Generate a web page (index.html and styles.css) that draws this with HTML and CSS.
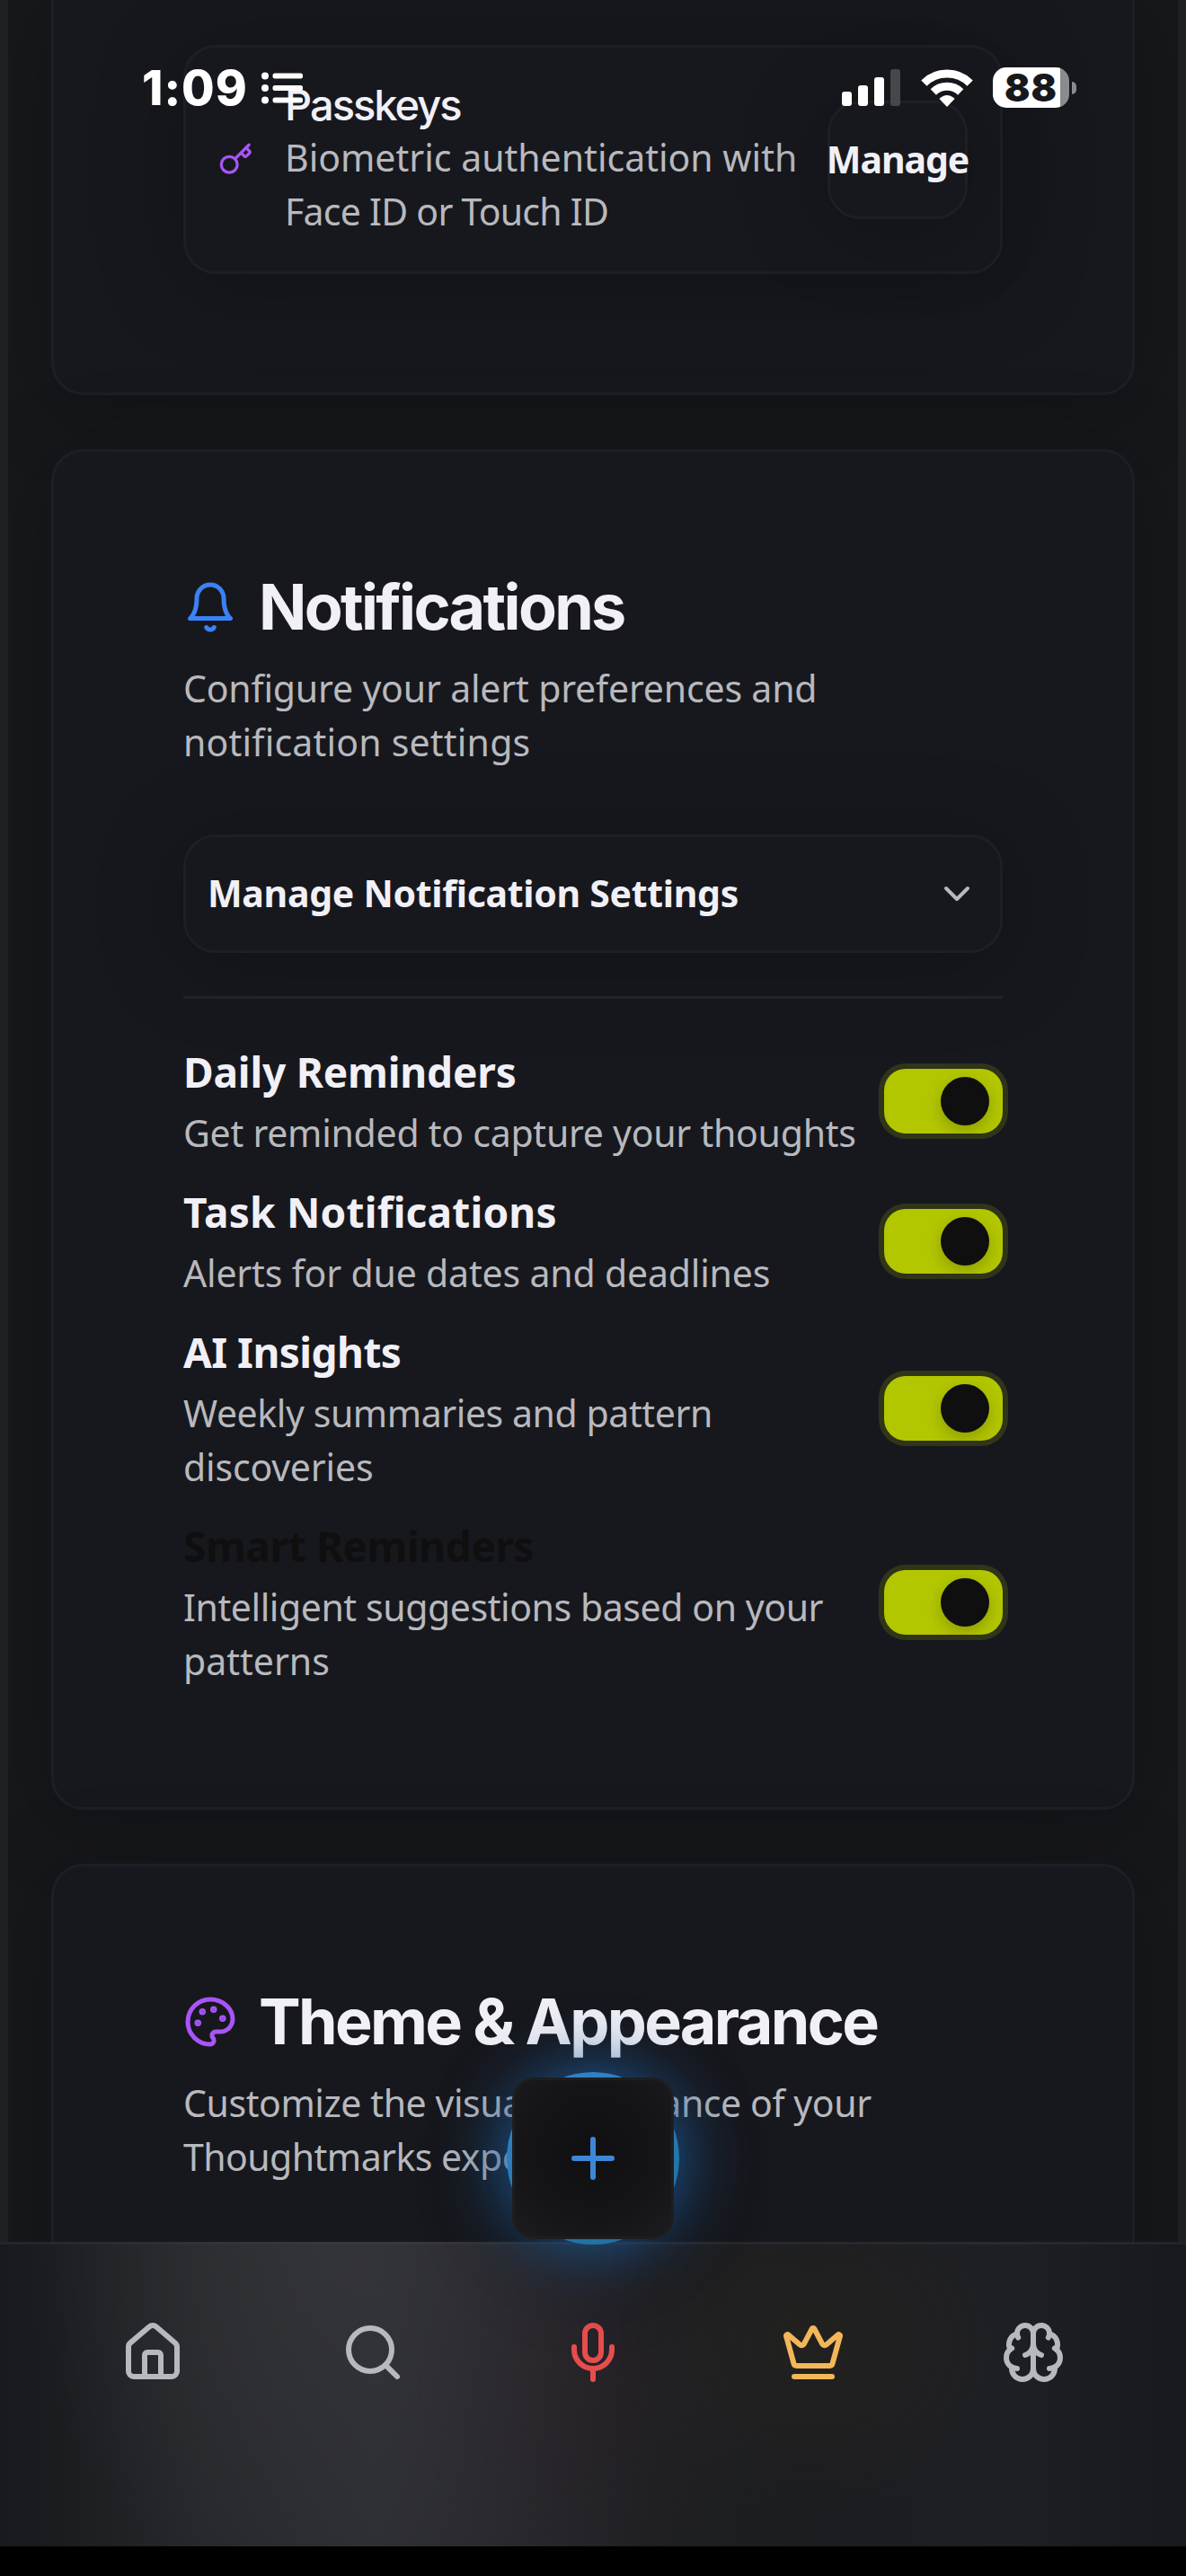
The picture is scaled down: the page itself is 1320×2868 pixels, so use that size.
FILE: index.html
```html
<!DOCTYPE html>
<html lang="en">
<head>
<meta charset="utf-8">
<title>Settings</title>
<link rel="stylesheet" href="styles.css">
</head>
<body>
<div class="screen">
  <main class="page">
    <section class="card card-first">
      <div class="passkey">
        <svg class="key" viewBox="0 0 24 24"><path d="m15.5 7.5 2.3 2.3a1 1 0 0 0 1.4 0l2.1-2.1a1 1 0 0 0 0-1.4L19 4"/><path d="m21 2-9.6 9.6"/><circle cx="7.5" cy="15.5" r="5.5"/></svg>
        <div class="passkey-text">
          <h3 class="passkey-title">Passkeys</h3>
          <p class="desc"><span class="line ls-0">Biometric authentication with</span> <span class="line ls-n7">Face ID or Touch ID</span></p>
        </div>
        <button class="manage">Manage</button>
      </div>
    </section>

    <section class="card">
      <header class="heading">
        <svg class="heading-icon blue" viewBox="0 0 24 24"><path d="M6 8a6 6 0 0 1 12 0c0 7 3 9 3 9H3s3-2 3-9"/><path d="M10.3 21a1.94 1.94 0 0 0 3.4 0"/></svg>
        <h2>Notifications</h2>
      </header>
      <p class="desc intro"><span class="line ls-n2">Configure your alert preferences and</span> <span class="line ls-p2">notification settings</span></p>
      <button class="dropdown">
        <span>Manage Notification Settings</span>
        <svg class="chevron" viewBox="0 0 24 24"><path d="m6 9 6 6 6-6"/></svg>
      </button>
      <div class="rows">
        <div class="row">
          <div class="row-text">
            <h3 class="row-title ls-n2">Daily Reminders</h3>
            <p class="desc"><span class="line ls-n3">Get reminded to capture your thoughts</span></p>
          </div>
          <span class="toggle"><i class="knob"></i></span>
        </div>
        <div class="row">
          <div class="row-text">
            <h3 class="row-title ls-p2">Task Notifications</h3>
            <p class="desc"><span class="line ls-n2">Alerts for due dates and deadlines</span></p>
          </div>
          <span class="toggle"><i class="knob"></i></span>
        </div>
        <div class="row">
          <div class="row-text">
            <h3 class="row-title ls-n5">AI Insights</h3>
            <p class="desc"><span class="line ls-n4">Weekly summaries and pattern</span> <span class="line ls-n2">discoveries</span></p>
          </div>
          <span class="toggle"><i class="knob"></i></span>
        </div>
        <div class="row">
          <div class="row-text">
            <h3 class="row-title row-title-dark ls-n4">Smart Reminders</h3>
            <p class="desc"><span class="line ls-n4">Intelligent suggestions based on your</span> <span class="line ls-0">patterns</span></p>
          </div>
          <span class="toggle"><i class="knob"></i></span>
        </div>
      </div>
    </section>

    <section class="card card-last">
      <header class="heading">
        <svg class="heading-icon purple" viewBox="0 0 24 24"><circle cx="13.5" cy="6.5" r=".5"/><circle cx="17.5" cy="10.5" r=".5"/><circle cx="8.5" cy="7.5" r=".5"/><circle cx="6.5" cy="12.5" r=".5"/><path d="M12 2C6.5 2 2 6.5 2 12s4.5 10 10 10c.926 0 1.648-.746 1.648-1.688 0-.437-.18-.835-.437-1.125-.29-.289-.438-.652-.438-1.125a1.64 1.64 0 0 1 1.668-1.668h1.996c3.051 0 5.555-2.503 5.555-5.554C21.965 6.012 17.461 2 12 2z"/></svg>
        <h2>Theme &amp; Appearance</h2>
      </header>
      <p class="desc intro"><span class="line ls-n4">Customize the visual appearance of your</span> <span class="line ls-n5">Thoughtmarks experience</span></p>
    </section>
  </main>

  <nav class="tabbar">
    <svg class="tab" viewBox="0 0 24 24"><path d="M15 21v-8a1 1 0 0 0-1-1h-4a1 1 0 0 0-1 1v8"/><path d="M3 10a2 2 0 0 1 .709-1.528l7-5.999a2 2 0 0 1 2.582 0l7 5.999A2 2 0 0 1 21 10v9a2 2 0 0 1-2 2H5a2 2 0 0 1-2-2z"/></svg>
    <svg class="tab" viewBox="0 0 24 24"><circle cx="11" cy="11" r="8"/><path d="m21 21-4.3-4.3"/></svg>
    <svg class="tab red" viewBox="0 0 24 24"><path d="M12 19v3"/><path d="M19 10v1a7 7 0 0 1-14 0v-1"/><rect x="9" y="2" width="6" height="13" rx="3"/></svg>
    <svg class="tab gold" viewBox="0 0 24 24"><path d="M11.562 3.266a.5.5 0 0 1 .876 0L15.39 8.87a1 1 0 0 0 1.516.294L21.183 5.5a.5.5 0 0 1 .798.519l-2.834 10.246a1 1 0 0 1-.956.734H5.81a1 1 0 0 1-.957-.734L2.02 6.02a.5.5 0 0 1 .798-.519l4.276 3.664a1 1 0 0 0 1.516-.294z"/><path d="M5 21h14"/></svg>
    <svg class="tab" viewBox="0 0 24 24"><path d="M12 5a3 3 0 1 0-5.997.125 4 4 0 0 0-2.526 5.77 4 4 0 0 0 .556 6.588A4 4 0 1 0 12 18Z"/><path d="M12 5a3 3 0 1 1 5.997.125 4 4 0 0 1 2.526 5.77 4 4 0 0 1-.556 6.588A4 4 0 1 1 12 18Z"/><path d="M15 13a4.5 4.5 0 0 1-3-4 4.5 4.5 0 0 1-3 4"/><path d="M17.599 6.5a3 3 0 0 0 .399-1.375"/><path d="M6.003 5.125A3 3 0 0 0 6.401 6.5"/><path d="M3.477 10.896a4 4 0 0 1 .585-.396"/><path d="M19.938 10.5a4 4 0 0 1 .585.396"/><path d="M6 18a4 4 0 0 1-1.967-.516"/><path d="M19.967 17.484A4 4 0 0 1 18 18"/></svg>
  </nav>
  <div class="home-strip"></div>

  <div class="fab">
    <button class="fab-button"><svg class="plus" viewBox="0 0 24 24"><path d="M5 12h14M12 5v14"/></svg></button>
  </div>

  <div class="status">
    <span class="clock">1:09</span>
    <svg class="list" viewBox="0 0 46 36"><g fill="#fff"><circle cx="4" cy="4.5" r="4"/><circle cx="4" cy="18" r="4"/><circle cx="4" cy="31.5" r="4"/><rect x="12.5" y="1.5" width="33.5" height="6" rx="2.5"/><rect x="12.5" y="15" width="33.5" height="6" rx="2.5"/><rect x="12.5" y="28.5" width="33.5" height="6" rx="2.5"/></g></svg>
    <svg class="signal" viewBox="0 0 65 41"><g fill="#fff"><rect x="0" y="25" width="11" height="16" rx="3"/><rect x="18" y="18" width="11" height="23" rx="3"/><rect x="36" y="9" width="11" height="32" rx="3"/></g><rect x="54" y="0" width="11" height="41" rx="3" fill="#46474b"/></svg>
    <svg class="wifi" viewBox="0 0 58 42"><g fill="none" stroke="#fff" stroke-width="9"><path d="M3.4 15.6A36.5 36.5 0 0 1 54.6 15.6"/><path d="M13.8 25.4A22 22 0 0 1 44.2 25.4"/></g><path d="M29 42 20.4 33Q29 25 37.6 33Z" fill="#fff"/></svg>
    <span class="battery"><span class="level">88</span></span><span class="nub"></span>
  </div>
</div>
</body>
</html>
```
FILE: styles.css
```css
* { box-sizing: border-box; }

body {
  margin: 0;
  background: #000;
  color: #f1f0f6;
  font-family: "Noto Sans", sans-serif;
}

h2, h3, p { margin: 0; }

button {
  font: inherit;
  color: inherit;
  padding: 0;
}

svg {
  display: block;
  flex: none;
  fill: none;
}

.screen {
  position: relative;
  width: 1320px;
  height: 2868px;
  overflow: hidden;
  background: #17181c;
}

.page {
  display: flex;
  flex-direction: column;
  gap: 60px;
  height: 2496px;
  padding: 0 48px;
  overflow: hidden;
  border-left: 9px solid #1e2024;
  border-right: 9px solid #1e2024;
}

.card, .passkey, .manage, .dropdown {
  background: #17181d;
  border: 3px solid #1e1f24;
  border-radius: 36px;
  box-shadow: 0 12px 96px rgba(0, 0, 0, .25);
}

.card {
  flex: none;
  padding: 132px 144px;
}

.card-first {
  height: 440px;
  padding-top: 50px;
  border-top: 0;
  border-radius: 0 0 36px 36px;
}

.card-last { height: 700px; }

/* Passkeys */
.passkey {
  display: flex;
  align-items: center;
  height: 255px;
  padding: 0 36px;
}

.key {
  width: 39px;
  height: 39px;
  margin-right: 35px;
  stroke: #a855f7;
  stroke-width: 2;
  stroke-linecap: round;
  stroke-linejoin: round;
}

.passkey-title {
  margin-bottom: 1px;
  font: 500 47px/54px Inter, sans-serif;
  letter-spacing: -2px;
}

.manage {
  display: flex;
  align-items: center;
  justify-content: center;
  width: 156px;
  height: 132px;
  margin-left: auto;
  padding-bottom: 2px;
  font-size: 41px;
  font-weight: 700;
  letter-spacing: -1.07px;
  white-space: nowrap;
}

/* Text */
.desc {
  padding-bottom: 1px;
  color: #b8b9be;
  font-size: 41px;
  line-height: 60px;
  white-space: nowrap;
}

.line { display: block; }

.ls-n7 { letter-spacing: -.74px; }
.ls-n5 { letter-spacing: -.54px; }
.ls-n4 { letter-spacing: -.42px; }
.ls-n3 { letter-spacing: -.26px; }
.ls-n2 { letter-spacing: -.18px; }
.ls-0 { letter-spacing: 0; }
.ls-p2 { letter-spacing: .2px; }

.heading {
  display: flex;
  align-items: center;
  gap: 24px;
  margin-bottom: 19px;
}

.heading h2 {
  font: 700 70px/82px Inter, sans-serif;
  letter-spacing: -2.65px;
  white-space: nowrap;
}

.heading-icon {
  width: 60px;
  height: 60px;
  stroke: currentColor;
  stroke-width: 2;
  stroke-linecap: round;
  stroke-linejoin: round;
}

.blue { color: #3b82f6; }
.purple { color: #a855f7; }
.purple circle { fill: currentColor; }

.intro { margin-bottom: 72px; }

.dropdown {
  display: flex;
  align-items: center;
  justify-content: space-between;
  width: 100%;
  height: 132px;
  padding: 0 24px;
  font-size: 41px;
  font-weight: 700;
  letter-spacing: -.3px;
}

.dropdown span { padding-bottom: 2px; }

.chevron {
  width: 48px;
  height: 48px;
  stroke: #b8b9be;
  stroke-width: 2;
  stroke-linecap: round;
  stroke-linejoin: round;
}

/* Notification rows */
.rows {
  display: flex;
  flex-direction: column;
  gap: 24px;
  margin-top: 48px;
  padding-top: 48px;
  border-top: 3px solid #222328;
}

.row {
  display: flex;
  align-items: center;
  justify-content: space-between;
}

.row-title {
  margin-bottom: 4px;
  font-size: 46px;
  font-weight: 700;
  line-height: 67px;
  white-space: nowrap;
}

.row-title-dark { color: #0f0f10; }

.toggle {
  display: flex;
  align-items: center;
  justify-content: flex-end;
  flex: none;
  width: 132px;
  height: 72px;
  padding-right: 15px;
  border-radius: 24px;
  background: #b3c700;
  box-shadow: 0 0 0 6px #303419;
  overflow: hidden;
}

.knob {
  width: 54px;
  height: 54px;
  border-radius: 50%;
  background: #0f0f10;
  box-shadow: 0 6px 18px rgba(0, 0, 0, .22);
}

/* Tab bar */
.tabbar {
  position: absolute;
  left: 0;
  top: 2496px;
  display: flex;
  justify-content: space-around;
  width: 1320px;
  height: 339px;
  padding: 84px 48px 0;
  border-top: 3px solid rgba(255, 255, 255, .05);
  background:
    radial-gradient(ellipse 220px 190px at 900px 110px, rgba(44, 40, 26, .35), transparent),
    radial-gradient(ellipse 190px 220px at 650px 160px, rgba(44, 34, 40, .4), transparent),
    radial-gradient(ellipse 340px 420px at 370px 0, rgba(54, 55, 59, .7), transparent),
    linear-gradient(90deg, #171a1f 0, #1b1c20 60px, #26272b 220px, #2d2e33 420px, #28282d 580px, #1e1f23 730px, #1c1d21 900px, #1e1f24 1130px, #18191e 1320px);
}

.tab {
  width: 72px;
  height: 72px;
  stroke: #b8b9be;
  stroke-width: 2;
  stroke-linecap: round;
  stroke-linejoin: round;
}

.tab.red { stroke: #e84d4d; }
.tab.gold { stroke: #f3b759; }

.home-strip {
  position: absolute;
  left: 0;
  bottom: 0;
  width: 1320px;
  height: 33px;
  background: #000;
}

/* Floating add button */
.fab {
  position: absolute;
  left: 564px;
  top: 2307px;
  display: grid;
  place-items: center;
  width: 192px;
  height: 192px;
  border-radius: 50%;
  background: linear-gradient(155deg, #3684d0, #2378ae 60%, #216f9c);
  box-shadow: 0 0 72px 6px rgba(32, 100, 170, .85), 0 24px 96px rgba(0, 0, 0, .35);
}

.fab-button {
  display: grid;
  place-items: center;
  width: 180px;
  height: 180px;
  border: 3px solid #1e1e20;
  border-radius: 24px;
  background: radial-gradient(circle at 50% 45%, #101012 0, #151517 60%, #1c1c1e 100%);
}

.plus {
  width: 72px;
  height: 72px;
  stroke: #3d87d6;
  stroke-width: 2;
  stroke-linecap: round;
}

/* Status bar */
.status {
  position: absolute;
  left: 0;
  top: 0;
  display: flex;
  align-items: center;
  width: 1320px;
  height: 195px;
  padding-left: 158px;
  color: #fff;
}

.clock {
  width: 133px;
  font: 800 53px/64px Inter, sans-serif;
  letter-spacing: 1px;
  white-space: nowrap;
}

.list { width: 46px; height: 36px; }
.signal { width: 65px; height: 41px; margin-left: 600px; }
.wifi { width: 58px; height: 42px; margin-left: 23px; }

.battery {
  width: 85px;
  height: 45px;
  margin-left: 22px;
  border-radius: 15px;
  overflow: hidden;
  background: linear-gradient(90deg, #fff 75px, #8a8b8e 75px);
}

.level {
  display: block;
  padding-left: 13px;
  color: #17181c;
  font: 900 42px/45px Inter, sans-serif;
  letter-spacing: 1px;
}

.nub {
  width: 5px;
  height: 14px;
  margin-left: 3px;
  border-radius: 0 5px 5px 0;
  background: #8a8b8e;
}
```
